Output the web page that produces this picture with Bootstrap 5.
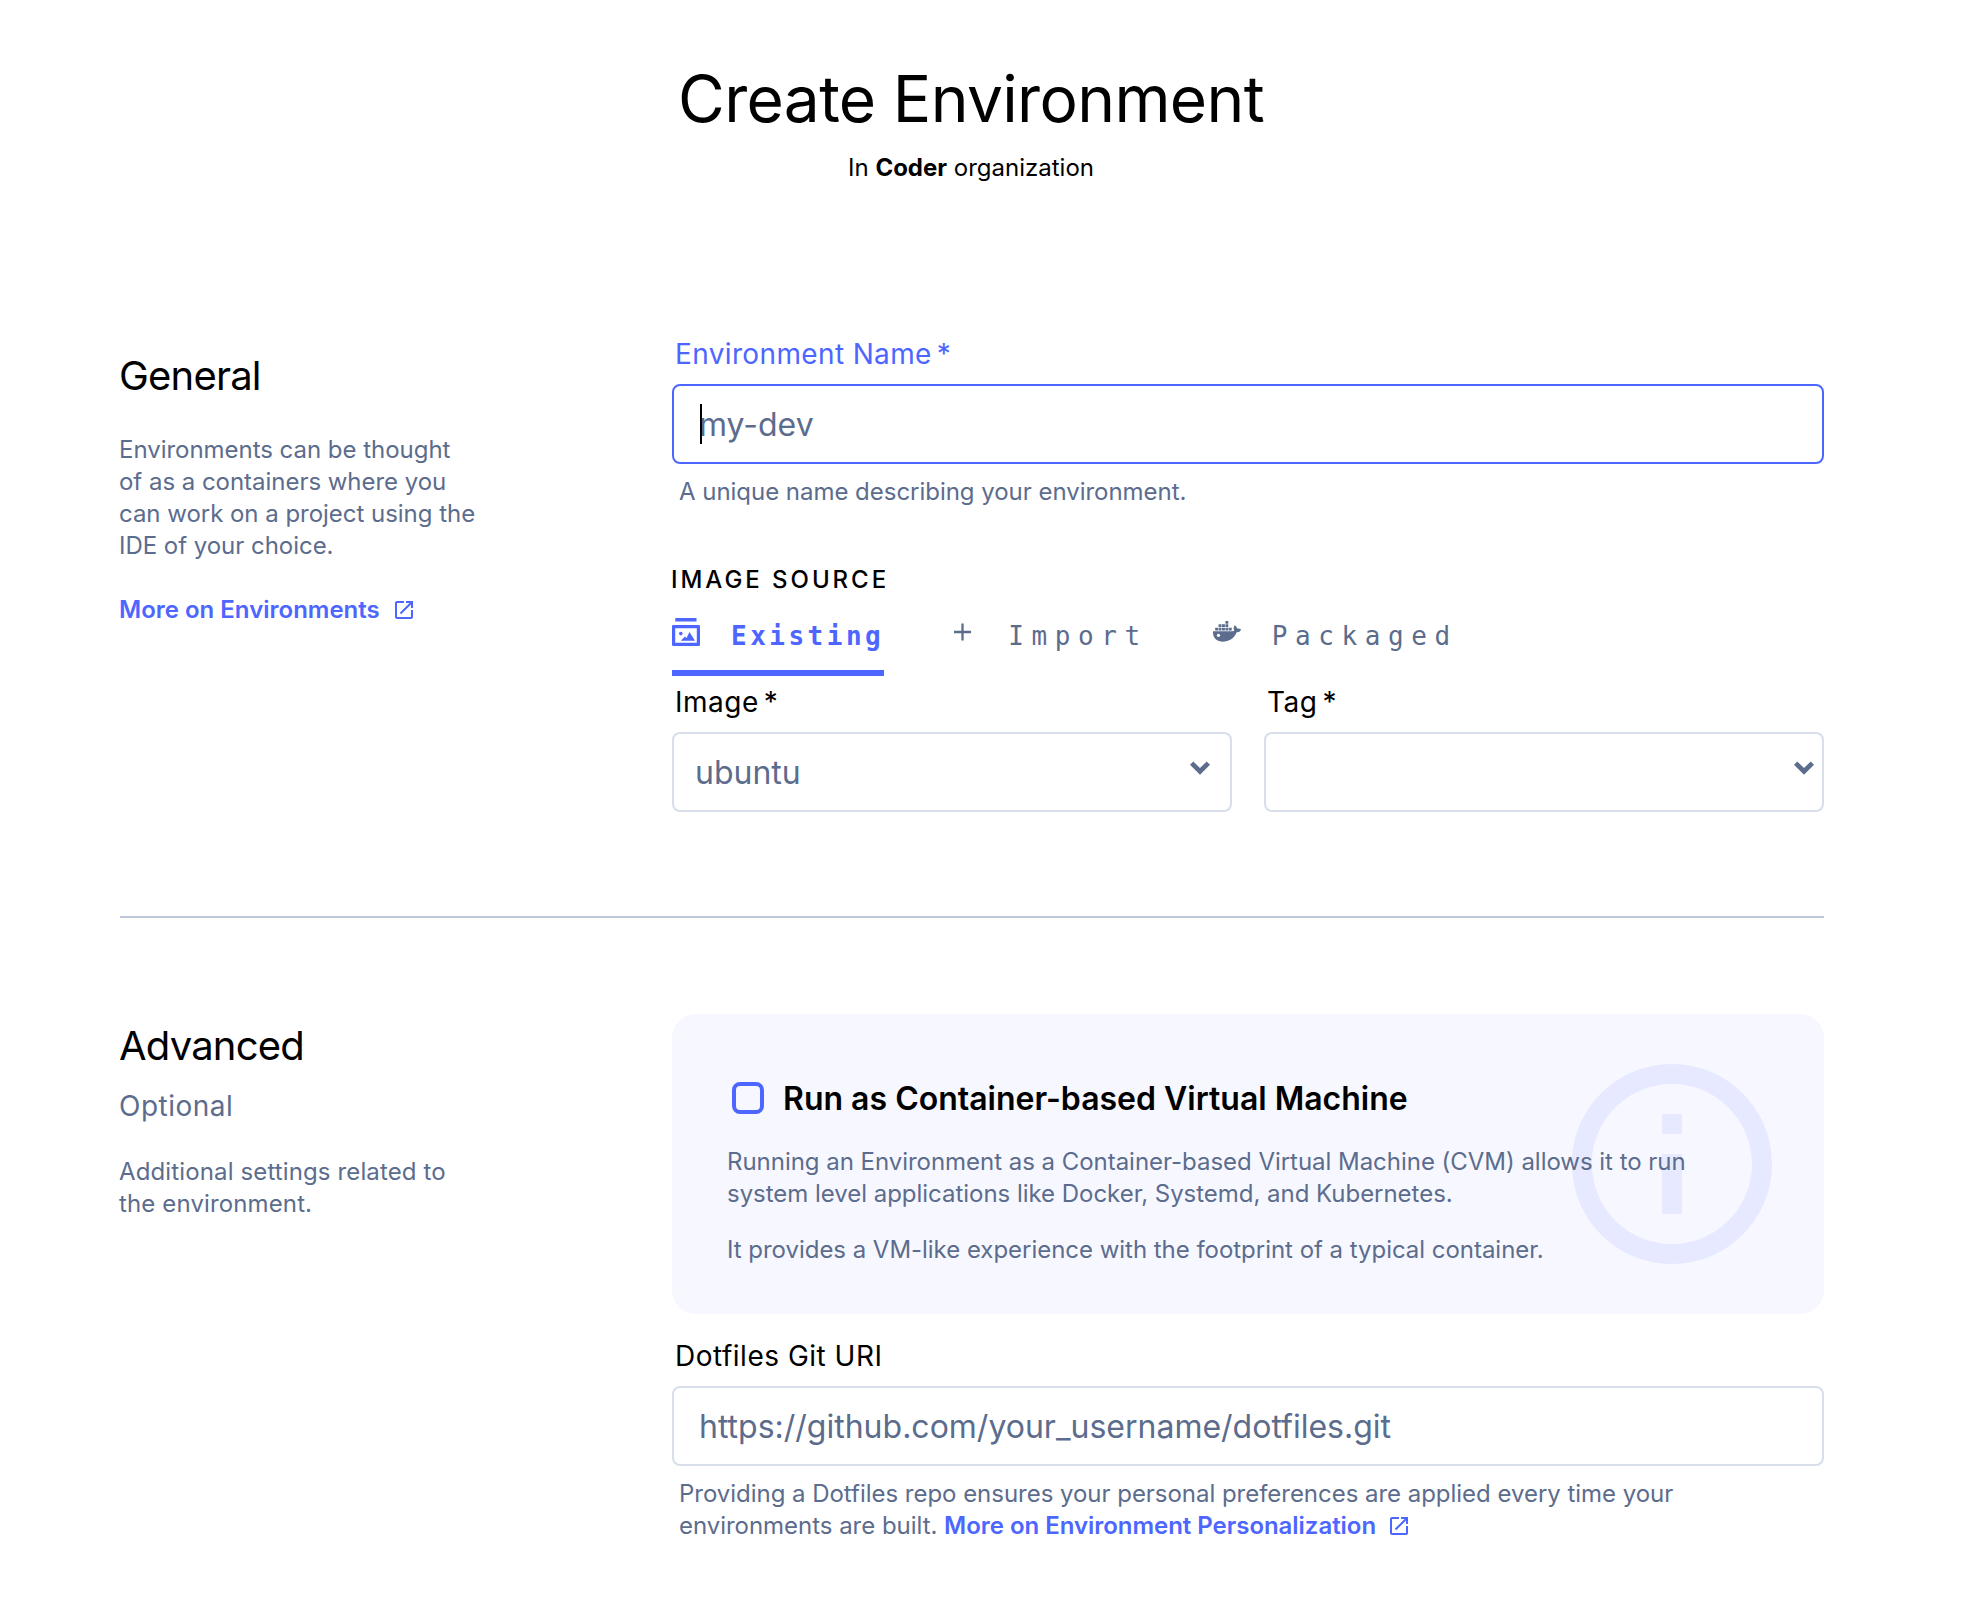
<!DOCTYPE html>
<html lang="en">
<head>
<meta charset="utf-8">
<meta name="viewport" content="width=device-width, initial-scale=1">
<title>Create Environment</title>
<link href="https://cdn.jsdelivr.net/npm/bootstrap@5.3.0/dist/css/bootstrap.min.css" rel="stylesheet">
<style>
  :root { --ink: #5c6c8d; --brand: #4d66ff; --line: #d9deeb; }
  body { font-family: Inter, "Liberation Sans", sans-serif; color: #000; background: #fff; }
  .page { width: 1704px; margin-left: 120px; padding-top: 61px; }
  .page-head { margin-right: 2px; }
  .page-title { font-size: 64px; line-height: 76px; font-weight: 400; letter-spacing: -.64px; margin-bottom: 15px; }
  .page-sub { font-size: 24px; line-height: 32px; }
  .general { padding-top: 153px; }
  .side-col { width: 552px; }
  .side-text { width: 368px; margin-left: -1px; }
  .body-text { font-size: 24px; line-height: 32px; letter-spacing: -.03px; color: var(--ink); }
  .side-title { font-size: 40px; line-height: 48px; font-weight: 400; letter-spacing: -.8px; }
  .side-optional { font-size: 28px; line-height: 34px; letter-spacing: .5px; color: var(--ink); margin: 19px 0 33px; }
  .general .side-text { padding-top: 15px; }
  .general .side-title { margin-bottom: 34px; }
  .general .side-text p { margin-bottom: 32px; }
  .advanced-text { padding-top: 8px; }
  .advanced-text .body-text { letter-spacing: .13px; }
  .brand-link { color: var(--brand); font-weight: 600; text-decoration: none; }
  .brand-link svg { width: 24px; height: 24px; margin-left: 12px; vertical-align: -4px; fill: currentColor; }
  .body-link { font-size: 24px; line-height: 32px; display: block; }
  .field-help .brand-link svg { margin-left: 11px; }
  .field-label { display: block; font-size: 28px; line-height: 34px; letter-spacing: .5px; padding-left: 3px; margin-bottom: 13px; }
  .field-label.is-active { color: var(--brand); letter-spacing: .36px; }
  .field-label .req { margin-left: 5px; letter-spacing: 0; }
  .form-control.field, .form-select.field { height: 80px; border: 2px solid var(--line); border-radius: 8px; font-size: 32px; line-height: 40px; padding: 0 25px; color: var(--ink); background: #fff; box-shadow: none; }
  .form-select.field { padding: 2px 21px 0; }
  .form-control.field::placeholder { color: var(--ink); opacity: 1; }
  .form-control.field.is-focused { border-color: var(--brand); }
  .caret-bar { left: 28px; top: 20px; width: 2px; height: 40px; background: #000; }
  .field-help { padding-left: 7px; margin-top: 12px; }
  .source-title { font-size: 24px; line-height: 32px; font-weight: 500; letter-spacing: 2.950px; margin: 56px 0 0 -1px; }
  .source-tabs { gap: 65px; margin-bottom: 9px; }
  .source-tabs .nav-link { font-family: "DejaVu Sans Mono", monospace; font-size: 26px; line-height: 32px; letter-spacing: 7.600px; color: var(--ink); padding: 22px 0 18px; border-bottom: 6px solid transparent; border-radius: 0; white-space: nowrap; }
  .source-tabs .nav-link.active { color: var(--brand); font-weight: 700; letter-spacing: 3.500px; border-color: var(--brand); }
  .source-tabs svg { width: 28px; height: 28px; flex: none; margin-right: 31px; }
  .source-tabs span { padding-top: 2px; }
  .selects { gap: 32px; }
  .select-arrow { width: 20px; height: 14px; top: 29px; right: 22px; }
  .select-arrow.at-edge { right: 10px; }
  .rule-line { height: 2px; background: #bfc7da; margin: 104px 0 96px; }
  .cvm-box { background: #f7f8ff; border-radius: 24px; height: 300px; padding: 65px 55px 0; }
  .cvm-check.form-check-input { width: 32px; height: 32px; border: 4px solid var(--brand); border-radius: 8px; margin: -2px 19px 0 5px; background-color: transparent; flex: none; }
  .cvm-title { font-size: 32px; line-height: 40px; font-weight: 600; }
  .cvm-info { width: 240px; height: 240px; right: 32px; top: 30px; fill: #e6e9ff; }
  .cvm-first { margin: 27px 0 24px; }
  .dot-label { margin-top: 25px; }
</style>
</head>
<body>
<main class="page">
  <header class="page-head text-center">
    <h1 class="page-title">Create Environment</h1>
    <p class="page-sub mb-0">In <strong>Coder</strong> organization</p>
  </header>

  <section class="d-flex general">
    <aside class="side-col flex-shrink-0">
      <div class="side-text">
        <h2 class="side-title">General</h2>
        <p class="body-text">Environments can be thought<br>of as a containers where you<br>can work on a project using the<br>IDE of your choice.</p>
        <a class="brand-link body-link text-nowrap" href="#">More on Environments<svg viewBox="0 0 24 24"><path d="M19 19H5V5h7V3H5a2 2 0 0 0-2 2v14a2 2 0 0 0 2 2h14c1.100 0 2-.9 2-2v-7h-2v7zM14 3v2h3.590l-9.830 9.830 1.410 1.410L19 6.410V10h2V3h-7z"/></svg></a>
      </div>
    </aside>
    <div class="flex-grow-1">
      <label class="field-label is-active" for="env">Environment Name<span class="req">*</span></label>
      <div class="position-relative">
        <input id="env" class="form-control field is-focused" type="text" placeholder="my-dev">
        <span class="caret-bar position-absolute"></span>
      </div>
      <p class="body-text field-help mb-0">A unique name describing your environment.</p>

      <h3 class="source-title">IMAGE SOURCE</h3>
      <nav class="nav source-tabs flex-nowrap">
        <a class="nav-link active d-flex" href="#"><svg viewBox="0 0 28 28" fill="currentColor"><path d="M3.300 0h21.200v3.500H3.300z"/><path fill-rule="evenodd" d="M1.200 7h25.600Q28 7 28 8.200v18.600q0 1.200-1.200 1.200H1.200Q0 28 0 26.800V8.200Q0 7 1.200 7zM3.200 10.200v14.600h21.600V10.200z"/><circle cx="8.800" cy="15.600" r="1.800"/><path d="M8.700 22.800l4.300-4.300 1.500 1.400 3-5.900 5.500 8.800z"/></svg><span>Existing</span></a>
        <a class="nav-link d-flex" href="#"><svg viewBox="0 0 28 28"><path d="M5 14h17M13.500 5.500v17" stroke="currentColor" stroke-width="2.300" fill="none"/></svg><span>Import</span></a>
        <a class="nav-link d-flex" href="#"><svg viewBox="0 0 28 28" fill="currentColor"><path fill-rule="evenodd" transform="translate(0 1.500) scale(.04375 .0462)" d="M349.900 236.300h-66.100v-59.400h66.100v59.400zm0-204.300h-66.100v60.700h66.100V32zm78.200 144.800H362v59.400h66.100v-59.400zm-156.300-72.100h-66.100v60.100h66.100v-60.100zm78.100 0h-66.100v60.100h66.100v-60.100zm276.800 100c-14.400-9.700-47.600-13.200-73.100-8.400-3.300-24-16.700-44.900-41.100-63.700l-14-9.300-9.300 14c-18.400 27.800-23.400 73.600-3.700 103.800-8.700 4.700-25.800 11.100-48.400 10.700H2.400c-8.700 50.800 5.800 116.800 44 162.100 37.100 43.900 92.700 66.200 165.400 66.200 157.400 0 273.900-72.500 328.400-204.200 21.400.4 67.600.1 91.300-45.200 1.500-2.500 6.600-13.200 8.500-17.100l-13.300-8.900zm-511.100-27.900h-66v59.400h66.100v-59.400zm78.100 0h-66.100v59.400h66.100v-59.400zm78.100 0h-66.100v59.400h66.100v-59.400zm-78.100-72.100h-66.100v60.100h66.100v-60.100z"/><circle cx="5.500" cy="17.300" r="1.600" fill="#fff"/></svg><span>Packaged</span></a>
      </nav>

      <div class="d-flex selects">
        <div class="w-50">
          <label class="field-label" for="img">Image<span class="req">*</span></label>
          <div class="position-relative">
            <select id="img" class="form-select field"><option>ubuntu</option></select>
            <svg class="select-arrow position-absolute" viewBox="0 0 20 14" fill="#5c6c8d"><path d="M3.300.5 10 7.100 16.700.5 20 3.800 10 13.800 0 3.800z"/></svg>
          </div>
        </div>
        <div class="w-50">
          <label class="field-label" for="tag">Tag<span class="req">*</span></label>
          <div class="position-relative">
            <select id="tag" class="form-select field"><option></option></select>
            <svg class="select-arrow at-edge position-absolute" viewBox="0 0 20 14" fill="#5c6c8d"><path d="M3.300.5 10 7.100 16.700.5 20 3.800 10 13.800 0 3.800z"/></svg>
          </div>
        </div>
      </div>
    </div>
  </section>

  <div class="rule-line"></div>

  <section class="d-flex">
    <aside class="side-col flex-shrink-0">
      <div class="side-text advanced-text">
        <h2 class="side-title mb-0">Advanced</h2>
        <p class="side-optional">Optional</p>
        <p class="body-text mb-0">Additional settings related to<br>the environment.</p>
      </div>
    </aside>
    <div class="flex-grow-1">
      <div class="cvm-box position-relative">
        <svg class="cvm-info position-absolute" viewBox="0 0 24 24"><path d="M11 7h2v2h-2zm0 4h2v6h-2zm1-9C6.480 2 2 6.480 2 12s4.480 10 10 10 10-4.480 10-10S17.520 2 12 2zm0 18c-4.410 0-8-3.590-8-8s3.590-8 8-8 8 3.590 8 8-3.590 8-8 8z"/></svg>
        <div class="position-relative">
          <div class="d-flex align-items-center">
            <input class="form-check-input cvm-check" type="checkbox" id="cvm">
            <label class="cvm-title" for="cvm">Run as Container-based Virtual Machine</label>
          </div>
          <p class="body-text cvm-first text-nowrap">Running an Environment as a Container-based Virtual Machine (CVM) allows it to run<br>system level applications like Docker, Systemd, and Kubernetes.</p>
          <p class="body-text mb-0 text-nowrap">It provides a VM-like experience with the footprint of a typical container.</p>
        </div>
      </div>

      <label class="field-label dot-label" for="dot">Dotfiles Git URI</label>
      <input id="dot" class="form-control field" type="text" placeholder="https://github.com/your_username/dotfiles.git">
      <p class="body-text field-help text-nowrap mb-0">Providing a Dotfiles repo ensures your personal preferences are applied every time your<br>environments are built. <a class="brand-link" href="#">More on Environment Personalization<svg viewBox="0 0 24 24"><path d="M19 19H5V5h7V3H5a2 2 0 0 0-2 2v14a2 2 0 0 0 2 2h14c1.100 0 2-.9 2-2v-7h-2v7zM14 3v2h3.590l-9.830 9.830 1.410 1.410L19 6.410V10h2V3h-7z"/></svg></a></p>
    </div>
  </section>
</main>
<script src="https://cdn.jsdelivr.net/npm/bootstrap@5.3.0/dist/js/bootstrap.bundle.min.js"></script>
</body>
</html>
